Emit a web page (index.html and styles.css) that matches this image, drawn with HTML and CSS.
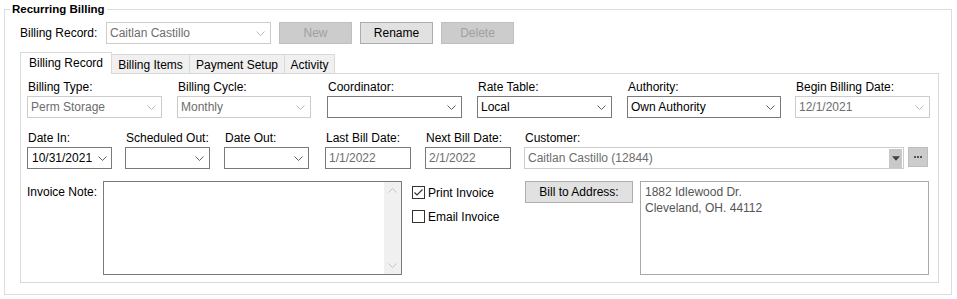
FILE: index.html
```html
<!DOCTYPE html>
<html lang="en">
<head>
  <meta charset="UTF-8">
  <title>Recurring Billing</title>
  <link rel="stylesheet" href="styles.css">
</head>
<body>
  <fieldset class="group">
    <legend>Recurring Billing</legend>

    <div class="record-row">
      <label>Billing Record:</label>
      <div class="combo disabled record">
        <span>Caitlan Castillo</span>
        <svg class="chev" width="9" height="5" viewBox="0 0 9 5"><path d="M0.5 0.5 L4.5 4.5 L8.5 0.5"/></svg>
      </div>
      <button class="btn disabled">New</button>
      <button class="btn">Rename</button>
      <button class="btn disabled">Delete</button>
    </div>

    <div class="tabs">
      <div class="tab active">Billing Record</div>
      <div class="tab t-items">Billing Items</div>
      <div class="tab t-pay">Payment Setup</div>
      <div class="tab t-act">Activity</div>
    </div>

    <div class="panel">
      <div class="row row1">
        <div class="col c150">
          <label>Billing Type:</label>
          <div class="combo disabled w135"><span>Perm Storage</span>
            <svg class="chev" width="9" height="5" viewBox="0 0 9 5"><path d="M0.5 0.5 L4.5 4.5 L8.5 0.5"/></svg></div>
        </div>
        <div class="col c150">
          <label>Billing Cycle:</label>
          <div class="combo disabled w134"><span>Monthly</span>
            <svg class="chev" width="9" height="5" viewBox="0 0 9 5"><path d="M0.5 0.5 L4.5 4.5 L8.5 0.5"/></svg></div>
        </div>
        <div class="col c150">
          <label>Coordinator:</label>
          <div class="combo w135"><span></span>
            <svg class="chev" width="9" height="5" viewBox="0 0 9 5"><path d="M0.5 0.5 L4.5 4.5 L8.5 0.5"/></svg></div>
        </div>
        <div class="col c150">
          <label>Rate Table:</label>
          <div class="combo w135"><span>Local</span>
            <svg class="chev" width="9" height="5" viewBox="0 0 9 5"><path d="M0.5 0.5 L4.5 4.5 L8.5 0.5"/></svg></div>
        </div>
        <div class="col c168">
          <label>Authority:</label>
          <div class="combo w154"><span>Own Authority</span>
            <svg class="chev" width="9" height="5" viewBox="0 0 9 5"><path d="M0.5 0.5 L4.5 4.5 L8.5 0.5"/></svg></div>
        </div>
        <div class="col">
          <label>Begin Billing Date:</label>
          <div class="combo disabled w135"><span>12/1/2021</span>
            <svg class="chev" width="9" height="5" viewBox="0 0 9 5"><path d="M0.5 0.5 L4.5 4.5 L8.5 0.5"/></svg></div>
        </div>
      </div>

      <div class="row row2">
        <div class="col c98">
          <label>Date In:</label>
          <div class="combo w85 date"><span>10/31/2021</span>
            <svg class="chev" width="9" height="5" viewBox="0 0 9 5"><path d="M0.5 0.5 L4.5 4.5 L8.5 0.5"/></svg></div>
        </div>
        <div class="col c99">
          <label>Scheduled Out:</label>
          <div class="combo w85"><span></span>
            <svg class="chev" width="9" height="5" viewBox="0 0 9 5"><path d="M0.5 0.5 L4.5 4.5 L8.5 0.5"/></svg></div>
        </div>
        <div class="col c101">
          <label>Date Out:</label>
          <div class="combo w85"><span></span>
            <svg class="chev" width="9" height="5" viewBox="0 0 9 5"><path d="M0.5 0.5 L4.5 4.5 L8.5 0.5"/></svg></div>
        </div>
        <div class="col c100">
          <label>Last Bill Date:</label>
          <div class="textbox readonly w86">1/1/2022</div>
        </div>
        <div class="col c99">
          <label>Next Bill Date:</label>
          <div class="textbox readonly w86">2/1/2022</div>
        </div>
        <div class="col">
          <label>Customer:</label>
          <div class="cust-line">
            <div class="combo disabled customer"><span>Caitlan Castillo (12844)</span>
              <div class="drop-btn"><svg width="9" height="5" viewBox="0 0 9 5"><path d="M0 0 H9 L4.5 5 Z"/></svg></div>
            </div>
            <button class="dots-btn"><i></i><i></i><i></i></button>
          </div>
        </div>
      </div>

      <div class="row row3">
        <label class="note-label">Invoice Note:</label>
        <div class="note">
          <div class="scroll">
            <svg width="9" height="5" viewBox="0 0 9 5"><path d="M0.5 4.5 L4.5 0.5 L8.5 4.5"/></svg>
            <svg width="9" height="5" viewBox="0 0 9 5"><path d="M0.5 0.5 L4.5 4.5 L8.5 0.5"/></svg>
          </div>
        </div>
        <div class="checks">
          <div class="check"><span class="box"><svg width="11" height="11" viewBox="0 0 11 11"><path d="M1.5 5.5 L4 8 L9.5 2.5"/></svg></span>Print Invoice</div>
          <div class="check"><span class="box"></span>Email Invoice</div>
        </div>
        <button class="btn bill-btn">Bill to Address:</button>
        <div class="address">1882 Idlewood Dr.<br>Cleveland, OH. 44112</div>
      </div>
    </div>
  </fieldset>
</body>
</html>
```

FILE: styles.css
```css
body {
  margin: 0;
  font-family: "Liberation Sans", Arial, sans-serif;
  font-size: 12px;
  color: #000;
  background: #fff;
}

.group {
  box-sizing: border-box;
  width: 948px;
  height: 293px;
  margin: 2px 0 0 4px;
  padding: 6px 15px 0 15px;
  border: 1px solid #dcdcdc;
  min-width: 0;
}

.group legend {
  font-weight: bold;
  font-size: 11.5px;
  line-height: 14px;
  padding: 0 2px;
  margin-left: -10px;
}

label {
  line-height: 14px;
}

/* record row */
.record-row {
  display: flex;
  align-items: center;
  height: 22px;
}

.record-row > label {
  width: 86px;
}

.btn {
  box-sizing: border-box;
  width: 73px;
  height: 22px;
  margin-left: 8px;
  padding: 0;
  font-family: inherit;
  font-size: 12px;
  color: #000;
  background: #e1e1e1;
  border: 1px solid #adadad;
}

.btn.disabled {
  color: #a0a0a0;
  background: #cccccc;
  border-color: #bfbfbf;
}

/* combos and boxes */
.combo, .textbox {
  box-sizing: border-box;
  height: 22px;
  display: flex;
  align-items: center;
  padding: 0 5px 0 3px;
  border: 1px solid #7a7a7a;
  background: #fff;
  white-space: nowrap;
}

.combo span {
  flex: 1;
}

.chev {
  fill: none;
  stroke: #606060;
  stroke-width: 1;
}

.combo.disabled {
  border-color: #cccccc;
  color: #6d6d6d;
}

.combo.disabled .chev {
  stroke: #bcbcbc;
}

.textbox.readonly {
  color: #6d6d6d;
}

.record { width: 165px; }
.w85 { width: 85px; }
.w86 { width: 86px; }
.w134 { width: 134px; }
.w135 { width: 135px; }
.w154 { width: 154px; }

.combo.date {
  padding-left: 4px;
  padding-right: 4px;
}

/* tabs */
.tabs {
  display: flex;
  align-items: flex-end;
  height: 21px;
  margin-top: 8px;
}

.tab {
  box-sizing: border-box;
  height: 19px;
  line-height: 18px;
  padding-top: 1px;
  text-align: center;
  background: #f0f0f0;
  border: 1px solid #d9d9d9;
  border-bottom: none;
  margin-left: -1px;
}

.tab.active {
  position: relative;
  z-index: 1;
  width: 92px;
  height: 22px;
  line-height: 20px;
  padding-top: 0;
  margin-left: 0;
  margin-bottom: -1px;
  background: #fff;
}

.t-items { width: 79px; }
.t-pay { width: 96px; }
.t-act { width: 51px; }

.panel {
  box-sizing: border-box;
  width: 919px;
  height: 210px;
  padding: 6px 0 0 6px;
  border: 1px solid #d9d9d9;
  background: #fff;
}

.row {
  display: flex;
}

.col {
  display: flex;
  flex-direction: column;
}

.col label {
  margin-bottom: 2px;
  padding-left: 1px;
}

.c150 { width: 150px; }
.c168 { width: 168px; }
.c98 { width: 98px; }
.c99 { width: 99px; }
.c100 { width: 100px; }
.c101 { width: 101px; }

.row2 { margin-top: 13px; }
.row3 {
  margin-top: 12px;
  align-items: flex-start;
}

/* customer */
.cust-line {
  display: flex;
  align-items: flex-start;
}

.combo.customer {
  width: 380px;
  padding-right: 1px;
}

.drop-btn {
  width: 13px;
  height: 19px;
  display: flex;
  align-items: center;
  justify-content: center;
  background: #c8c8c8;
}

.drop-btn svg {
  fill: #404040;
  width: 8px;
}

.dots-btn {
  box-sizing: border-box;
  width: 20px;
  height: 20px;
  margin-left: 4px;
  padding: 0;
  display: flex;
  align-items: center;
  justify-content: center;
  gap: 1px;
  background: #cccccc;
  border: 1px solid #bdbdbd;
}

.dots-btn i {
  width: 2px;
  height: 2px;
  background: #555;
}

/* invoice note */
.note-label {
  width: 76px;
  padding-top: 4px;
}

.note {
  box-sizing: border-box;
  width: 299px;
  height: 94px;
  display: flex;
  justify-content: flex-end;
  border: 1px solid #7a7a7a;
}

.scroll {
  width: 17px;
  display: flex;
  flex-direction: column;
  justify-content: space-between;
  align-items: center;
  padding: 6px 0;
  background: #f0f0f0;
}

.scroll svg {
  fill: none;
  stroke: #c2c2c2;
}

.checks {
  width: 113px;
  margin-left: 10px;
  padding-top: 5px;
}

.check {
  display: flex;
  align-items: center;
  height: 13px;
  margin-bottom: 11px;
}

.check .box {
  box-sizing: border-box;
  width: 13px;
  height: 13px;
  margin-right: 3px;
  border: 1px solid #333;
  display: flex;
  align-items: center;
  justify-content: center;
}

.check .box svg {
  fill: none;
  stroke: #333;
  stroke-width: 1.2;
}

.bill-btn {
  width: 108px;
  margin-left: 0;
}

.address {
  box-sizing: border-box;
  width: 289px;
  height: 94px;
  margin-left: 7px;
  padding: 2px 4px;
  line-height: 16px;
  color: #555;
  border: 1px solid #a9a9a9;
}
```
